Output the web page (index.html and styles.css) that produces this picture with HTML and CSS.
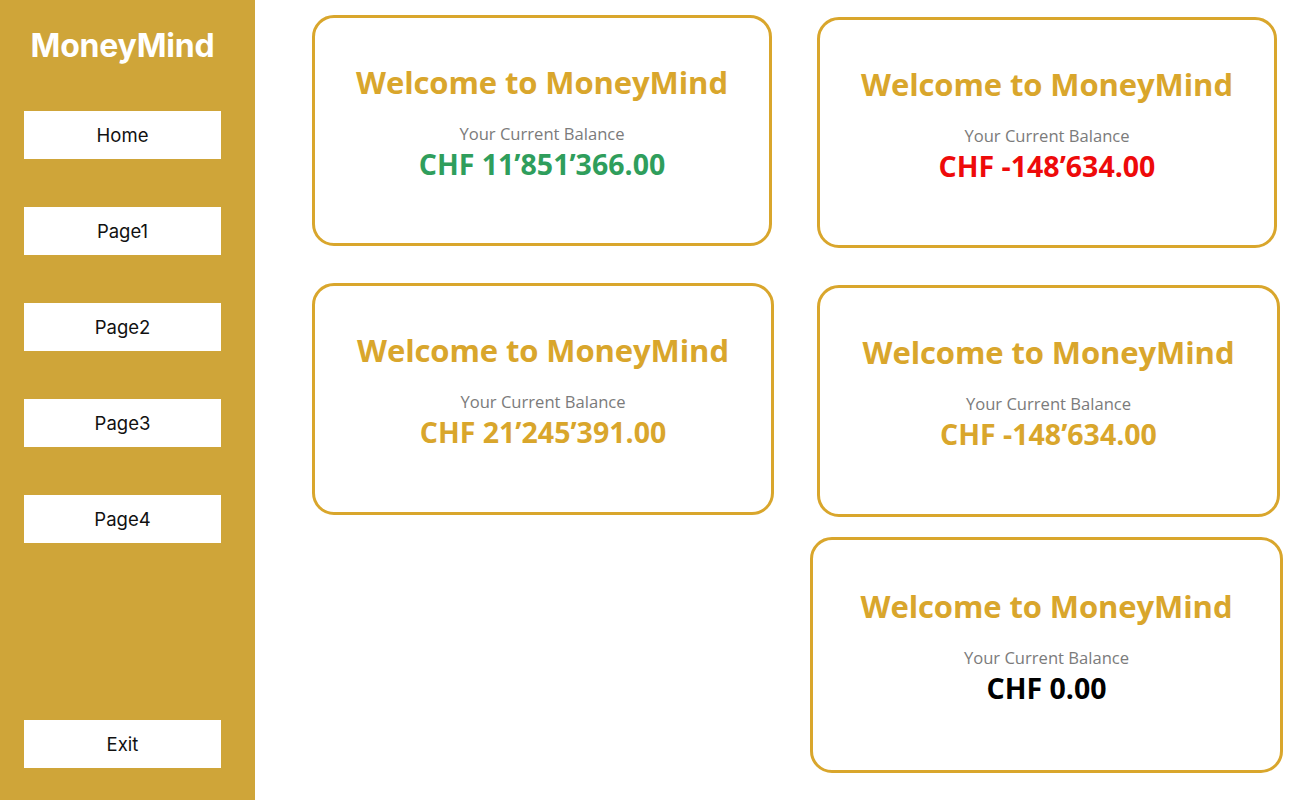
FILE: index.html
```html
<!DOCTYPE html>
<html lang="en">
<head>
<meta charset="utf-8">
<title>MoneyMind</title>
<link rel="stylesheet" href="styles.css">
</head>
<body>
<div class="app">
  <aside class="sidebar">
    <h1 class="brand">MoneyMind</h1>
    <nav class="nav">
      <button class="nav-btn">Home</button>
      <button class="nav-btn">Page1</button>
      <button class="nav-btn">Page2</button>
      <button class="nav-btn">Page3</button>
      <button class="nav-btn">Page4</button>
    </nav>
    <button class="nav-btn exit">Exit</button>
  </aside>
  <main class="main">
    <div class="col col-left">
      <section class="card card-1">
        <h2 class="card-title">Welcome to MoneyMind</h2>
        <p class="card-label">Your Current Balance</p>
        <p class="card-amount green">CHF 11’851’366.00</p>
      </section>
      <section class="card card-3">
        <h2 class="card-title">Welcome to MoneyMind</h2>
        <p class="card-label">Your Current Balance</p>
        <p class="card-amount gold">CHF 21’245’391.00</p>
      </section>
    </div>
    <div class="col col-right">
      <section class="card card-2">
        <h2 class="card-title">Welcome to MoneyMind</h2>
        <p class="card-label">Your Current Balance</p>
        <p class="card-amount red">CHF -148’634.00</p>
      </section>
      <section class="card card-4">
        <h2 class="card-title">Welcome to MoneyMind</h2>
        <p class="card-label">Your Current Balance</p>
        <p class="card-amount gold">CHF -148’634.00</p>
      </section>
      <section class="card card-5">
        <h2 class="card-title">Welcome to MoneyMind</h2>
        <p class="card-label">Your Current Balance</p>
        <p class="card-amount black">CHF 0.00</p>
      </section>
    </div>
  </main>
</div>
</body>
</html>
```

FILE: styles.css
```css
* { box-sizing: border-box; }
html, body { margin: 0; padding: 0; height: 100%; background: #ffffff; }
body { font-family: "Open Sans", "Noto Sans", sans-serif; }

.app { display: flex; height: 800px; }

.sidebar {
  width: 255px;
  flex: none;
  background: #cfa539;
  display: flex;
  flex-direction: column;
  align-items: center;
  padding: 26px 10px 0 0;
}
.brand {
  margin: 0;
  color: #ffffff;
  font-family: "Inter", sans-serif;
  font-weight: 700;
  font-size: 32px;
  line-height: 40px;
  letter-spacing: -0.2px;
}
.nav {
  display: flex;
  flex-direction: column;
  gap: 48px;
  margin-top: 45px;
}
.nav-btn {
  width: 197px;
  height: 48px;
  background: #ffffff;
  border: none;
  border-radius: 0;
  color: #111;
  font-family: "Inter", sans-serif;
  font-size: 18.5px;
  padding: 0;
}
.exit { margin-top: auto; margin-bottom: 32px; }

.main {
  flex: 1;
  display: flex;
  gap: 36px;
  padding: 15px 0 0 57px;
}
.col { display: flex; flex-direction: column; align-items: flex-start; }

.card {
  border: 3px solid #d9a62c;
  border-radius: 22px;
  background: #fff;
  display: flex;
  flex-direction: column;
  align-items: center;
  text-align: center;
}
.card-1 { width: 460px; height: 231px; padding-top: 44px; }
.card-3 { width: 462px; height: 232px; margin-top: 37px; padding-top: 44px; }
.card-2 { width: 460px; height: 231px; margin-top: 2px; margin-left: 7px; padding-top: 44px; }
.card-4 { width: 463px; height: 232px; margin-top: 37px; margin-left: 7px; padding-top: 44px; }
.card-5 { width: 473px; height: 236px; margin-top: 20px; padding-top: 46px; }

.card-title {
  margin: 0;
  color: #d9a62c;
  font-weight: 700;
  font-size: 31px;
  line-height: 40px;
  letter-spacing: -0.1px;
}
.card-label {
  margin: 21px 0 0;
  color: #7b7b7b;
  font-size: 16.6px;
  line-height: 22px;
}
.card-amount {
  margin: 1px 0 0;
  font-weight: 700;
  font-size: 28.5px;
  line-height: 36px;
  letter-spacing: 0;
}
.green { color: #2f9e5c; }
.red { color: #ee0a0a; }
.gold { color: #d9a62c; }
.black { color: #000; }
```
